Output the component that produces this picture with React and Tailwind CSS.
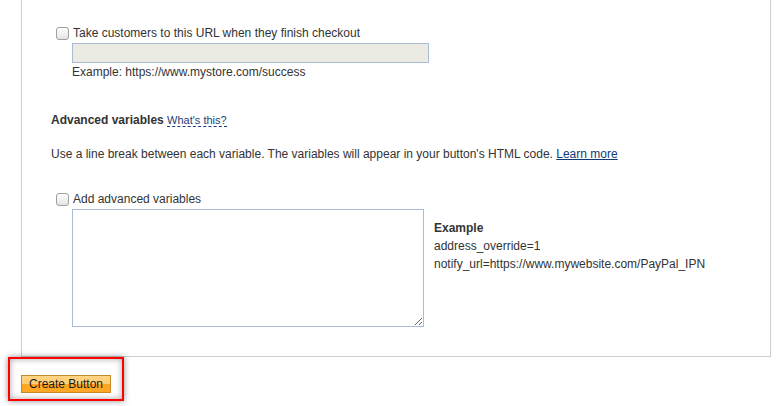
import React from 'react';

const Check = () => (
  <span className="inline-block w-[13px] h-[13px] shrink-0 rounded-[3px] border border-[#a0a0a0] bg-gradient-to-b from-[#ffffff] to-[#e4e4e4]" />
);

export default function App() {
  return (
    <div className="w-[784px] h-[406px] bg-white overflow-hidden text-[12px] leading-[16px] text-[#333] font-['Liberation_Sans',Arial,sans-serif]">
      <div className="ml-[21px] w-[750px] border-x border-b border-[#cccccc] pl-[29px] pt-[25px] pb-[29px]">
        <label className="flex items-center gap-[4px] ml-[5px]">
          <Check />
          <span>Take customers to this URL when they finish checkout</span>
        </label>
        <div className="ml-[21px] mt-[2px] w-[357px] h-[20px] bg-[#ebebe4] border border-[#a9bcd6]" />
        <p className="ml-[21px] mt-[1px]">Example: https://www.mystore.com/success</p>

        <p className="mt-[32px]">
          <span className="font-bold">Advanced variables</span>{' '}
          <a className="text-[11px] text-[#1a3e7a] border-b border-dashed border-[#1a3e7a]">What's this?</a>
        </p>

        <p className="mt-[18px]">
          Use a line break between each variable. The variables will appear in your button's HTML code.{' '}
          <a className="text-[#0f3a73] underline">Learn more</a>
        </p>

        <label className="flex items-center gap-[4px] ml-[5px] mt-[29px]">
          <Check />
          <span>Add advanced variables</span>
        </label>
        <div className="flex ml-[21px] mt-[2px]">
          <textarea className="w-[352px] h-[118px] border border-[#a9bcd6] bg-white resize" />
          <div className="ml-[10px] mt-[10px] leading-[18px]">
            <p className="font-bold">Example</p>
            <p>address_override=1</p>
            <p>notify_url=https://www.mywebsite.com/PayPal_IPN</p>
          </div>
        </div>
      </div>

      <div className="ml-[8px] w-[116px] h-[44px] border-[2px] border-[#ff0000] shadow-[0_0_6px_rgba(0,0,0,0.45),inset_0_0_6px_rgba(0,0,0,0.35)] flex items-start pl-[11px] pt-[16px]">
        <button className="h-[18px] px-[7px] border border-[#c58a2a] bg-[linear-gradient(to_bottom,#ffd585_0%,#ffcc70_50%,#ffa51f_50%,#ffa828_100%)] text-[12px] leading-[16px] text-[#1a1a1a]">
          Create Button
        </button>
      </div>
    </div>
  );
}
